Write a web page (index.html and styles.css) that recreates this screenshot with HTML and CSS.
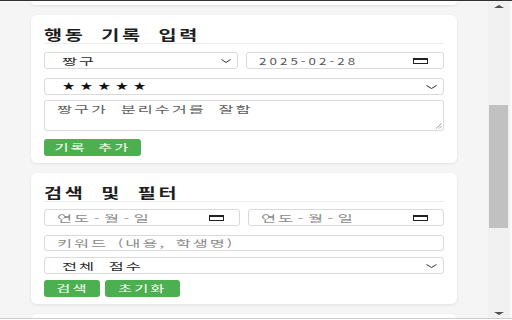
FILE: index.html
```html
<!DOCTYPE html>
<html lang="ko">
<head>
<meta charset="utf-8">
<title>행동 기록</title>
<link rel="stylesheet" href="styles.css">
</head>
<body>
<div class="frame">
  <div class="topline"></div>
  <div class="viewport">
    <main class="page">
      <div class="card card--cut"></div>

      <section class="card">
        <h2 class="card-title"><span class="title-text">행동 기록 입력</span></h2>
        <div class="row mt8">
          <div class="field field--select"><span class="txt">짱구</span><svg class="chev" width="10" height="4" viewBox="0 0 10 4"><polyline points="0.5,0.5 5,3.5 9.5,0.5" fill="none" stroke="#333" stroke-width="1"/></svg></div>
          <div class="field field--date"><span class="num">2025-02-28</span><svg class="cal" width="15" height="6" viewBox="0 0 15 6"><rect x="0.5" y="0.5" width="14" height="5" fill="none" stroke="#222" stroke-width="1"/><rect x="0" y="0" width="15" height="2" fill="#222"/></svg></div>
        </div>
        <div class="field field--select mt9"><span class="stars">★★★★★</span><svg class="chev chev--wide" width="11" height="4" viewBox="0 0 11 4"><polyline points="0.5,0.5 5.5,3.5 10.5,0.5" fill="none" stroke="#333" stroke-width="1"/></svg></div>
        <div class="field field--area mt5"><span class="txt txt--muted">짱구가 분리수거를 잘함</span><svg class="grip" width="7" height="6" viewBox="0 0 7 6"><line x1="6.5" y1="0.5" x2="1" y2="5.5" stroke="#999"/><line x1="6.5" y1="3" x2="4" y2="5.5" stroke="#999"/></svg></div>
        <div class="actions mt8">
          <button class="btn btn--add" type="button"><span class="btn-text">기록 추가</span></button>
        </div>
      </section>

      <section class="card">
        <h2 class="card-title"><span class="title-text">검색 및 필터</span></h2>
        <div class="row mt7">
          <div class="field field--date"><span class="txt txt--ph">연도<span class="sep">-</span>월<span class="sep">-</span>일</span><svg class="cal" width="15" height="6" viewBox="0 0 15 6"><rect x="0.5" y="0.5" width="14" height="5" fill="none" stroke="#222" stroke-width="1"/><rect x="0" y="0" width="15" height="2" fill="#222"/></svg></div>
          <div class="field field--date"><span class="txt txt--ph">연도<span class="sep">-</span>월<span class="sep">-</span>일</span><svg class="cal" width="15" height="6" viewBox="0 0 15 6"><rect x="0.5" y="0.5" width="14" height="5" fill="none" stroke="#222" stroke-width="1"/><rect x="0" y="0" width="15" height="2" fill="#222"/></svg></div>
        </div>
        <div class="field field--text field--short mt9"><span class="txt txt--ph txt--tight">키워드 (내용, 학생명)</span></div>
        <div class="field field--select mt6"><span class="txt">전체 점수</span><svg class="chev chev--wide" width="11" height="4" viewBox="0 0 11 4"><polyline points="0.5,0.5 5.5,3.5 10.5,0.5" fill="none" stroke="#333" stroke-width="1"/></svg></div>
        <div class="actions mt6">
          <button class="btn btn--search" type="button"><span class="btn-text">검색</span></button>
          <button class="btn btn--reset" type="button"><span class="btn-text">초기화</span></button>
        </div>
      </section>

      <div class="card card--peek"></div>
    </main>
    <div class="scrollbar">
      <div class="sb-btn"><span class="arrow arrow--up"></span></div>
      <div class="sb-track"><div class="sb-thumb"></div></div>
      <div class="sb-btn"><span class="arrow arrow--down"></span></div>
    </div>
  </div>
  <div class="bottomline"></div>
</div>
</body>
</html>
```

FILE: styles.css
```css
* { box-sizing: border-box; }
html, body { margin: 0; padding: 0; }
body {
  width: 512px;
  height: 320px;
  overflow: hidden;
  background: #f5f5f5;
  font-family: "Noto Sans CJK KR", "Noto Sans", sans-serif;
  color: #222;
}
.frame { display: flex; flex-direction: column; height: 320px; }
.topline { height: 1px; background: #333; flex: none; }
.bottomline { height: 2px; border-top: 1px solid #cdcdcd; background: #fff; flex: none; }
.viewport { flex: 1; min-height: 0; display: flex; }
.page {
  flex: 1;
  min-width: 0;
  overflow: hidden;
  display: flex;
  flex-direction: column;
  gap: 10px;
  padding: 0 31px;
}
.card {
  flex: none;
  background: #fff;
  border-radius: 6px;
  box-shadow: 0 1px 3px rgba(0, 0, 0, 0.09);
  padding: 10px 13px 7px;
}
.card--cut { height: 4px; padding: 0; border-radius: 0 0 6px 6px; }
.card--peek { height: 12px; padding: 0; }

.card-title {
  margin: 0;
  height: 19px;
  line-height: 18px;
  border-bottom: 1px solid #ececec;
  font-size: 14px;
  font-weight: 700;
  color: #1e1e1e;
  white-space: nowrap;
}
.title-text {
  display: inline-block;
  transform: scaleX(1.4);
  transform-origin: 0 50%;
  letter-spacing: 2px;
  word-spacing: 5.2px;
}

.mt5 { margin-top: 5px; }
.mt6 { margin-top: 6px; }
.mt7 { margin-top: 7px; }
.mt8 { margin-top: 8px; }
.mt9 { margin-top: 9px; }

.row { display: flex; gap: 8px; }
.row .field { flex: 1; }

.field {
  height: 17px;
  border: 1px solid #dadada;
  border-radius: 3px;
  background: #fff;
  display: flex;
  align-items: center;
  white-space: nowrap;
  overflow: hidden;
}
.field--select { padding: 0 6px 0 17px; }
.field--date { padding: 0 15px 0 12px; }
.field--text { padding: 0 12px; }
.field--short { height: 16px; }
.field--area {
  height: 31px;
  padding: 2px 1px 1px 12px;
  flex-direction: column;
  align-items: flex-start;
  justify-content: space-between;
}

.txt {
  display: inline-block;
  font-size: 9.6px;
  line-height: 12px;
  color: #2a2a2a;
  transform: scaleX(1.7);
  transform-origin: 0 50%;
  letter-spacing: 1.2px;
  word-spacing: 3.5px;
}
.txt--muted { color: #5e5e5e; }
.txt--ph { color: #8a8a8a; }
.txt--tight { word-spacing: 1.8px; }
.sep { margin: 0 1.5px; }
.num {
  display: inline-block;
  font-size: 9.5px;
  line-height: 12px;
  color: #555;
  transform: scaleX(1.4);
  transform-origin: 0 50%;
  letter-spacing: 2.2px;
}
.stars {
  display: inline-block;
  font-family: "DejaVu Sans", sans-serif;
  font-size: 11px;
  line-height: 12px;
  color: #111;
  transform: scaleX(1.35);
  transform-origin: 0 50%;
  letter-spacing: 3.3px;
}
.chev, .cal { margin-left: auto; flex: none; }
.grip { align-self: flex-end; flex: none; }

.actions { display: flex; gap: 5px; }
.btn {
  height: 17px;
  border: none;
  border-radius: 3px;
  background: #4caf50;
  color: #fff;
  padding: 0;
  display: flex;
  align-items: center;
  justify-content: center;
  font-family: inherit;
  cursor: pointer;
}
.btn--add { width: 97px; }
.btn--search { width: 56px; }
.btn--reset { width: 75px; }
.btn-text {
  display: inline-block;
  font-size: 9px;
  line-height: 12px;
  white-space: nowrap;
  transform: scaleX(1.7);
  transform-origin: 50% 50%;
  letter-spacing: 1.2px;
  word-spacing: 3px;
}

.scrollbar {
  flex: none;
  width: 24px;
  background: #f1f1f1;
  border-right: 2px solid #fafafa;
  display: flex;
  flex-direction: column;
}
.sb-btn { height: 10px; display: flex; align-items: center; justify-content: center; flex: none; }
.sb-track { flex: 1; }
.sb-thumb { margin: 94px 0 0 1px; width: 19px; height: 123px; background: #c1c1c1; }
.arrow { width: 0; height: 0; border-left: 5px solid transparent; border-right: 5px solid transparent; }
.arrow--up { border-bottom: 3px solid #505050; }
.arrow--down { border-top: 3px solid #505050; }
```
